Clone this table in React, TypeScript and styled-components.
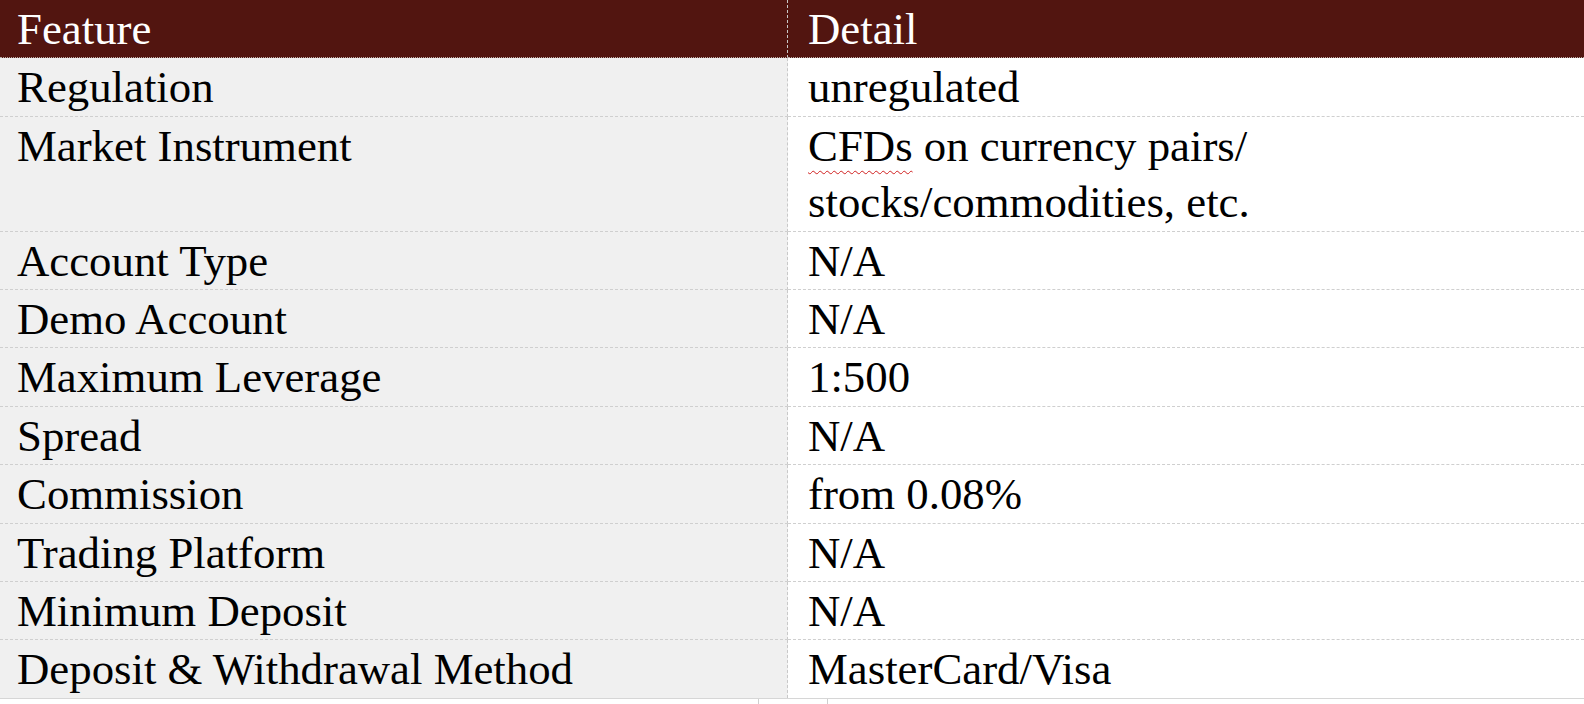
import React from "react";
import styled, { createGlobalStyle } from "styled-components";

const Global = createGlobalStyle`
  html, body { margin: 0; padding: 0; background: #ffffff; }
  body { font-family: "Liberation Serif", "Times New Roman", serif; }
`;

const Page = styled.div`
  width: 1584px;
  height: 704px;
  overflow: hidden;
  background: #ffffff;
  display: flex;
  flex-direction: column;
`;

const Table = styled.div`
  display: grid;
  grid-template-columns: 788px 1fr;
  border-bottom: 1px solid #d6d6d6;
`;

const Cell = styled.div<{ $head?: boolean; $left?: boolean; $last?: boolean }>`
  font-size: 44.8px;
  line-height: 56.4px;
  padding-top: 1px;
  color: ${(p) => (p.$head ? "#ffffff" : "#000000")};
  background: ${(p) => (p.$head ? "#521510" : p.$left ? "#f0f0f0" : "#ffffff")};
  border-right: ${(p) => (p.$left ? "1px dashed #c9c9c9" : "none")};
  border-bottom: ${(p) =>
    p.$last ? "none" : p.$head ? "1px dotted #b9aaa6" : "1px dashed #cfcfcf"};
  padding-left: ${(p) => (p.$left ? "17px" : "20px")};
`;

const Misspelled = styled.span`
  text-decoration: underline wavy #d02020;
  text-decoration-thickness: 1px;
  text-underline-offset: 9px;
`;

const Footer = styled.div`
  flex: 1;
  display: flex;
  padding-left: 758px;
`;

const Tab = styled.div`
  width: 68px;
  border-left: 1px solid #cfcfcf;
  border-right: 1px solid #cfcfcf;
`;

const rows: [string, React.ReactNode][] = [
  ["Regulation", "unregulated"],
  [
    "Market Instrument",
    <>
      <Misspelled>CFDs</Misspelled> on currency pairs/
      <br />
      stocks/commodities, etc.
    </>,
  ],
  ["Account Type", "N/A"],
  ["Demo Account", "N/A"],
  ["Maximum Leverage", "1:500"],
  ["Spread", "N/A"],
  ["Commission", "from 0.08%"],
  ["Trading Platform", "N/A"],
  ["Minimum Deposit", "N/A"],
  ["Deposit & Withdrawal Method", "MasterCard/Visa"],
];

export default function App() {
  return (
    <Page>
      <Global />
      <Table>
        <Cell $head $left>Feature</Cell>
        <Cell $head>Detail</Cell>
        {rows.map(([k, v], i) => (
          <React.Fragment key={k}>
            <Cell $left $last={i === rows.length - 1}>{k}</Cell>
            <Cell $last={i === rows.length - 1}>{v}</Cell>
          </React.Fragment>
        ))}
      </Table>
      <Footer>
        <Tab />
      </Footer>
    </Page>
  );
}
